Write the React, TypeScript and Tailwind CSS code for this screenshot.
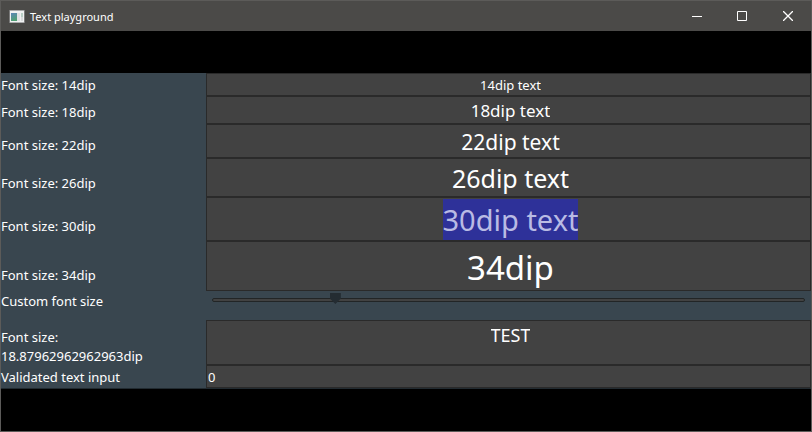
import { useState } from "react";
import type { ReactNode } from "react";
import clsx from "clsx";

type Sample = { size: number; text: string; className: string; selected?: boolean };

const samples: Sample[] = [
  { size: 14, text: "14dip text", className: "text-[13px] leading-[20px]" },
  { size: 18, text: "18dip text", className: "text-[17px] leading-[25px]" },
  { size: 22, text: "22dip text", className: "mt-px text-[21px] leading-[30px]" },
  { size: 26, text: "26dip text", className: "text-[25px] leading-[36px]" },
  { size: 30, text: "30dip text", className: "text-[29px] leading-[41px]", selected: true },
  { size: 34, text: "34dip", className: "mt-0.5 text-[33px] leading-[45px]" },
];

const MIN_SIZE = 8;
const MAX_SIZE = 62;

function Box({ children, className }: { children: ReactNode; className?: string }) {
  return (
    <div className={clsx("flex min-w-0 border border-[#2a2a2a] bg-[#424242] pt-px", className)}>
      {children}
    </div>
  );
}

function Row({ children, className }: { children: ReactNode; className?: string }) {
  return (
    <div className={clsx("grid grid-cols-[205px_1fr] items-baseline", className)}>{children}</div>
  );
}

function TitleBar() {
  return (
    <header className="flex h-[30px] items-center bg-[#4b4a48] pl-2">
      <svg width="16" height="13" viewBox="0 0 16 13" aria-hidden="true">
        <defs>
          <linearGradient id="pane" x1="0" y1="0" x2="0.3" y2="1">
            <stop offset="0" stopColor="#5b86b8" />
            <stop offset="1" stopColor="#4f9f73" />
          </linearGradient>
        </defs>
        <rect x="0.5" y="0" width="15" height="13" fill="#a9aaab" />
        <rect x="1" y="1" width="14" height="11" fill="#f0f1f2" />
        <rect x="2" y="3" width="6" height="8" fill="url(#pane)" />
        <rect x="8" y="3" width="3" height="8" fill="#dfe1e4" />
        <rect x="12" y="3" width="2" height="4" fill="#b9cfc6" />
        <rect x="12" y="7" width="2" height="4" fill="#d9dbdd" />
      </svg>
      <h1 className="ml-[5px] flex-1 text-[11px]">Text playground</h1>
      <button type="button" aria-label="Minimize" className="flex h-full w-[45px] items-center justify-center">
        <svg width="10" height="10" viewBox="0 0 10 10" aria-hidden="true">
          <path d="M0 5.5h10" stroke="#fff" />
        </svg>
      </button>
      <button type="button" aria-label="Maximize" className="flex h-full w-[45px] items-center justify-center">
        <svg width="10" height="10" viewBox="0 0 10 10" aria-hidden="true">
          <path d="M.5.5h9v9h-9z" fill="none" stroke="#fff" />
        </svg>
      </button>
      <button type="button" aria-label="Close" className="flex h-full w-[47px] items-center justify-center">
        <svg width="10" height="10" viewBox="0 0 10 10" aria-hidden="true">
          <path d="M0 0l10 10M10 0L0 10" stroke="#fff" strokeWidth="1.3" />
        </svg>
      </button>
    </header>
  );
}

export default function App() {
  const [size, setSize] = useState(18.87962962962963);

  return (
    <div className="flex min-h-screen flex-col border border-[#5c5b59] bg-black font-['Noto_Sans','Open_Sans',sans-serif] text-[13px] leading-[19px] text-white">
      <TitleBar />
      <main className="flex flex-1 flex-col justify-center">
        <form className="border-b border-[#222b31] bg-[#39464f]">
          {samples.map((s) => (
            <Row key={s.size}>
              <label htmlFor={`sample-${s.size}`}>Font size: {s.size}dip</label>
              <Box className="justify-center pl-1">
                <input
                  id={`sample-${s.size}`}
                  type="text"
                  defaultValue={s.text}
                  className={clsx(
                    "field-sizing-content text-center outline-none",
                    s.className,
                    s.selected && "bg-[#2e3199] text-[#b9bbe4]",
                  )}
                />
              </Box>
            </Row>
          ))}
          <div className="grid h-[29px] grid-cols-[205px_1fr] items-start">
            <label htmlFor="custom-size" className="pt-px">Custom font size</label>
            <div className="flex px-1.5 pt-0.5">
              <input
                id="custom-size"
                type="range"
                min={MIN_SIZE}
                max={MAX_SIZE}
                step="any"
                value={size}
                onChange={(e) => setSize(Number(e.target.value))}
                className="h-[14px] w-full appearance-none bg-transparent outline-none [&::-webkit-slider-runnable-track]:h-1 [&::-webkit-slider-runnable-track]:rounded-sm [&::-webkit-slider-runnable-track]:border [&::-webkit-slider-runnable-track]:border-[#222526] [&::-webkit-slider-runnable-track]:bg-[#424242] [&::-webkit-slider-thumb]:-mt-1.5 [&::-webkit-slider-thumb]:h-[11px] [&::-webkit-slider-thumb]:w-[11px] [&::-webkit-slider-thumb]:appearance-none [&::-webkit-slider-thumb]:bg-[#242c32] [&::-webkit-slider-thumb]:[clip-path:polygon(0_0,100%_0,100%_50%,50%_100%,0_50%)]"
              />
            </div>
          </div>
          <Row className="h-[45px]">
            <label htmlFor="custom-text" className="pr-3">Font size: {size}dip</label>
            <Box className="h-[45px] items-start justify-center pl-1">
              <input
                id="custom-text"
                type="text"
                defaultValue="TEST"
                className="field-sizing-content text-center text-[18px] leading-[27px] outline-none"
              />
            </Box>
          </Row>
          <Row>
            <label htmlFor="validated">Validated text input</label>
            <Box className="pl-px">
              <input
                id="validated"
                type="text"
                inputMode="numeric"
                defaultValue="0"
                className="w-full text-[13px] leading-[20px] outline-none"
              />
            </Box>
          </Row>
        </form>
      </main>
    </div>
  );
}
